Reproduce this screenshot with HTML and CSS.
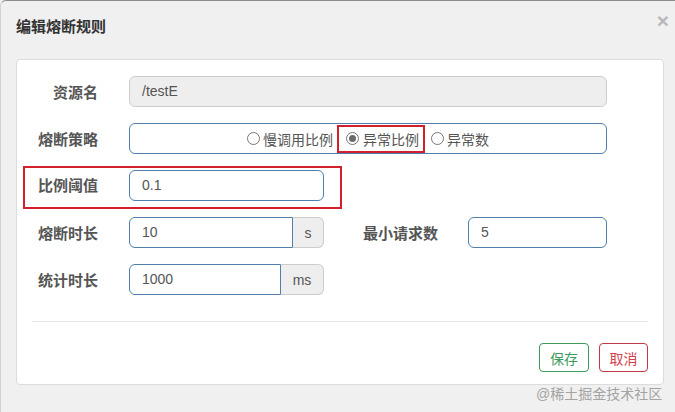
FILE: index.html
```html
<!DOCTYPE html>
<html lang="zh">
<head>
<meta charset="utf-8">
<title>编辑熔断规则</title>
<link rel="stylesheet" href="styles.css">
</head>
<body>
<div class="modal">
  <div class="header">
    <h4 class="title">编辑熔断规则</h4>
    <span class="close">×</span>
  </div>
  <div class="panel">
    <div class="row">
      <label class="lbl">资源名</label>
      <div class="input disabled w-full">/testE</div>
    </div>
    <div class="row">
      <label class="lbl">熔断策略</label>
      <div class="radio-box w-full">
        <span class="opt"><span class="radio"></span>慢调用比例</span>
        <span class="opt mark"><span class="radio checked"></span>异常比例</span>
        <span class="opt last"><span class="radio"></span>异常数</span>
      </div>
    </div>
    <div class="row">
      <div class="mark-row">
        <label class="lbl lbl-mark">比例阈值</label>
        <div class="input w-mid">0.1</div>
      </div>
    </div>
    <div class="row">
      <label class="lbl">熔断时长</label>
      <div class="group">
        <div class="input grouped w-s">10</div>
        <span class="addon a-s">s</span>
      </div>
      <label class="lbl lbl-right">最小请求数</label>
      <div class="input w-small">5</div>
    </div>
    <div class="row">
      <label class="lbl">统计时长</label>
      <div class="group">
        <div class="input grouped w-ms">1000</div>
        <span class="addon a-ms">ms</span>
      </div>
    </div>
    <hr class="divider">
    <div class="footer">
      <button class="btn btn-save">保存</button>
      <button class="btn btn-cancel">取消</button>
    </div>
  </div>
  <div class="watermark">@稀土掘金技术社区</div>
</div>
</body>
</html>
```
FILE: styles.css
```css
* { box-sizing: border-box; }
html, body { margin: 0; padding: 0; }
body {
  background: #f0f0f0;
  font-family: "Liberation Sans", "Noto Sans CJK SC", sans-serif;
  font-size: 14px;
  color: #555;
  width: 675px;
  height: 412px;
  overflow: hidden;
}
.modal {
  position: relative;
  width: 675px;
  height: 412px;
  border-top: 1px solid #8c8c8c;
  border-left: 1px solid #d2d2d2;
  border-top-left-radius: 6px;
  background: #f0f0f0;
}
.header {
  display: flex;
  justify-content: space-between;
  align-items: flex-start;
  padding: 16px 6px 22px 15px;
  height: 58px;
}
.title {
  margin: 0;
  font-size: 15px;
  line-height: 20px;
  font-weight: bold;
  color: #333;
}
.close {
  font-size: 21px;
  font-weight: bold;
  line-height: 1;
  color: #b8b8b8;
  margin-top: -7px;
}
.panel {
  margin: 0 10px 0 15px;
  width: 648px;
  background: #fff;
  border: 1px solid #dcdcdc;
  border-radius: 4px;
  padding: 16px 15px 12px 15px;
}
.row {
  display: flex;
  align-items: center;
  height: 31px;
  margin-bottom: 16px;
}
.lbl {
  width: 66px;
  margin-right: 31px;
  text-align: right;
  font-size: 15px;
  font-weight: bold;
  color: #555;
  white-space: nowrap;
}
.input {
  height: 31px;
  border: 1px solid #4f80ad;
  border-radius: 6px;
  padding: 0 12px;
  line-height: 29px;
  color: #555;
  background: #fff;
}
.input.disabled {
  background: #eee;
  border-color: #ccc;
}
.w-full { width: 478px; }
.w-mid { width: 195px; }
.w-small { width: 139px; }
.radio-box {
  height: 31px;
  border: 1px solid #4f80ad;
  border-radius: 6px;
  display: flex;
  justify-content: center;
  align-items: center;
  color: #555;
}
.opt {
  display: flex;
  align-items: center;
  height: 28px;
}
.radio {
  width: 13px;
  height: 13px;
  border: 1px solid #767676;
  border-radius: 50%;
  margin-right: 3px;
  display: inline-flex;
  align-items: center;
  justify-content: center;
  background: #fff;
}
.radio.checked::after {
  content: "";
  width: 7px;
  height: 7px;
  border-radius: 50%;
  background: #6b6b6b;
}
.opt.mark {
  border: 2px solid #d1202c;
  padding: 0 4px 0 7px;
  margin-left: 4px;
}
.opt.mark .radio { margin-right: 4px; }
.opt.last { margin-left: 6px; }
.mark-row {
  display: flex;
  align-items: flex-start;
  border: 2px solid #d1202c;
  margin: -4px 0 -8px -9px;
  padding: 2px 16px 6px 0;
}
.lbl-mark {
  width: 73px;
  line-height: 31px;
}
.group { display: flex; width: 195px; }
.input.grouped {
  border-top-right-radius: 0;
  border-bottom-right-radius: 0;
}
.w-s { width: 164px; }
.w-ms { width: 152px; }
.addon {
  height: 31px;
  border: 1px solid #ccc;
  border-left: none;
  border-radius: 0 6px 6px 0;
  background: #eee;
  color: #555;
  display: flex;
  align-items: center;
  justify-content: center;
}
.a-s { width: 31px; }
.a-ms { width: 43px; }
.lbl-right {
  width: 76px;
  margin-left: 39px;
  margin-right: 29px;
  text-align: left;
}
.divider {
  border: none;
  border-top: 1px solid #e5e5e5;
  margin: 26px 0 21px 0;
}
.footer {
  display: flex;
  justify-content: flex-end;
  gap: 10px;
}
.btn {
  height: 29px;
  padding: 0;
  background: #fff;
  border: 1px solid;
  border-radius: 4px;
  font-family: "Liberation Sans", "Noto Sans CJK SC", sans-serif;
  font-size: 14px;
}
.btn-save { width: 50px; color: #3c9b5c; border-color: #3c9b5c; }
.btn-cancel { width: 49px; color: #d33f4c; border-color: #c0394b; }
.watermark {
  position: absolute;
  left: 535px;
  top: 382px;
  font-size: 14px;
  color: #a3a3a3;
  white-space: nowrap;
}
```
